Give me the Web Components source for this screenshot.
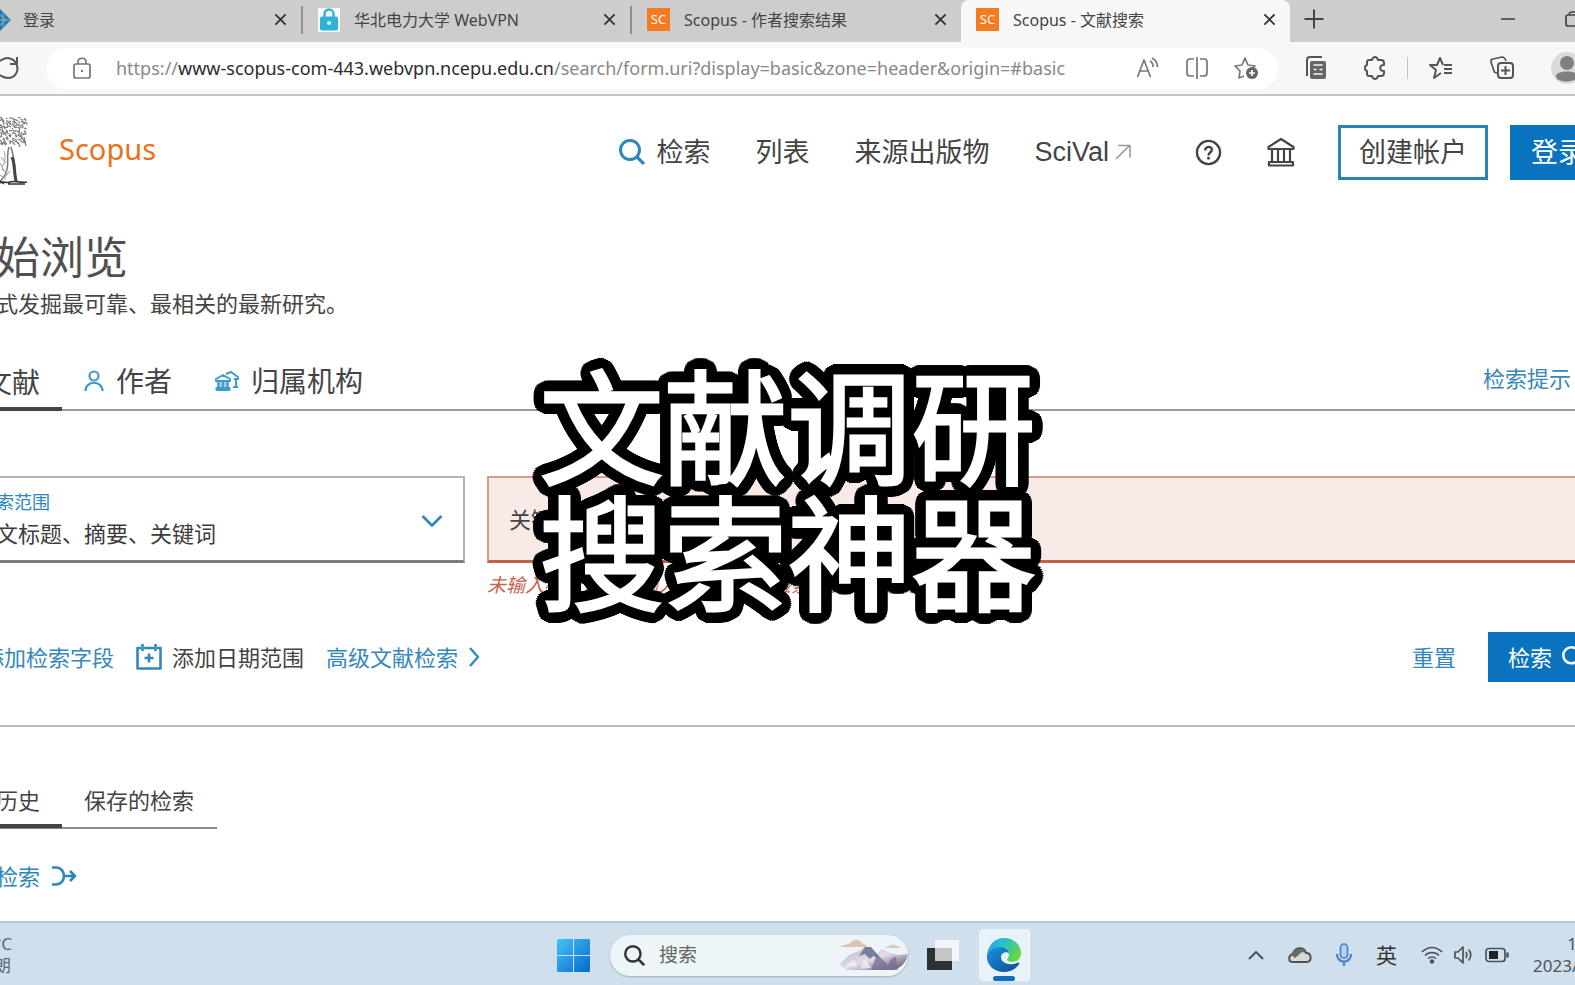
<!DOCTYPE html>
<html lang="zh-CN">
<head>
<meta charset="utf-8">
<meta name="viewport" content="width=device-width, initial-scale=1">
<title>Scopus - 文献搜索</title>
<style>
html, body { margin: 0; height: 100%; }
body { background: #fff; color: #444; font: 22px/32px "Noto Sans", "Noto Sans CJK SC", sans-serif; overflow: hidden; }
</style>
</head>
<body>
<app-window></app-window>
<script>
const ICONS = {
  close: ['0 0 14 14', '<path d="M1.5 1.500l11 11M12.500 1.500l-11 11" stroke-width="2"/>'],
  plus: ['0 0 20 20', '<path d="M10 0.500v19M0.500 10h19" stroke-width="2"/>'],
  minimize: ['0 0 14 14', '<path d="M0 7h14" stroke-width="1.600"/>'],
  restore: ['0 0 16 16', '<rect x="1" y="4" width="11" height="11" rx="2"/><path d="M4 4c0-2 1-3 3-3h5c2 0 3 1 3 3v5c0 2-1 3-2 3"/>'],
  diamond: ['0 0 11 22', '<path d="M0 0L11 11 0 22z" fill="#2a7ca8" stroke="none"/><path d="M0 6l6 5-6 5M3 4v14M0 11h10" stroke="#7bb5cf" stroke-width="1"/>'],
  vpn: ['0 0 22 24', '<path d="M0 0h22v24H0z" fill="#f4fcff" stroke="none"/><path d="M6.500 10V6a4.500 4.500 0 019 0v4" stroke="#2db3d6" stroke-width="2.400"/><rect x="2" y="8.500" width="18" height="14" rx="2" fill="#2db3d6" stroke="none"/><circle cx="11" cy="15" r="2" fill="#d9f4fb" stroke="none"/>'],
  reload: ['0 0 20 26', '<path d="M0 6C6 1 13 3 16 8c4 8-1 15-8 15-3 0-6-1-8-3M17 2v7h-7" stroke-width="2"/>'],
  lock: ['0 0 18 22', '<rect x="1" y="7" width="16" height="14" rx="2"/><path d="M5 7V5c0-5 8-5 8 0v2"/><circle cx="9" cy="14" r="1.200" fill="currentColor" stroke="none"/>'],
  read: ['0 0 24 22', '<path d="M1.500 20L8 3l6.500 17M4 14h8M14 4c2 1 3 3 3 6M16 1c4 2 5.500 5 5.500 9"/>'],
  split: ['0 0 24 22', '<path d="M9 2H5C3 2 2 3 2 5v11c0 2 1 3 3 3h4M15 2h4c2 0 3 1 3 3v11c0 2-1 3-3 3h-4M12 0v22"/>'],
  staradd: ['0 0 25 24', '<path d="M10 20l-5 2 1-7-5-5 7-1 3-7 3 7 7 1-2 2"/><circle cx="18" cy="17" r="6" fill="#666" stroke="none"/><path d="M18 14v6M15 17h6" stroke="#fff"/>'],
  pages: ['0 0 22 24', '<path d="M2 20V4c0-2 1-3 3-3h12" stroke-width="2"/><rect x="5" y="5" width="16" height="18" rx="2" fill="#666" stroke="none"/><path d="M8.500 9h9M8.500 13.500h3M8.500 18h9M14.500 13.500h3" stroke="#f7f7f7" stroke-width="1.500"/>'],
  puzzle: ['0 0 22 24', '<path d="M5 4h3c1-4 5-4 6 0h3c2 0 3 1 3 3v2c-5 0-5 6 0 6v2c0 2-1 3-3 3h-3c-1 4-5 4-6 0H5c-1 0-2-1-2-2v-3c-3-1-3-5 0-6V6c0-1 1-2 2-2z" stroke-width="2"/>'],
  starlist: ['0 0 24 24', '<path d="M12 17l-7 5 2-8-6-5h7l3-7 3 7M15 9h8M15 13h8M15 17h8" stroke-width="2"/>'],
  collect: ['0 0 24 24', '<path d="M7 17c-2 0-3-1-3-2L1 6c0-2 0-3 2-3l9-2c2 0 3 1 4 4"/><rect x="8" y="7" width="15" height="15" rx="3" stroke-width="2"/><path d="M15.500 10v9M11 14.500h9" stroke-width="2"/>'],
  avatar: ['0 0 32 32', '<circle cx="16" cy="16" r="16" fill="#dcdad8" stroke="none"/><circle cx="16" cy="11" r="7" fill="#82807e" stroke="none"/><path d="M5 24c0-6 22-6 22 0 0 7-22 8-22 0z" fill="#82807e" stroke="none"/>'],
  search: ['0 0 26 26', '<circle cx="11" cy="11" r="9.500" stroke-width="3"/><path d="M18 18l7 7" stroke-width="3.200"/>'],
  out: ['0 0 16 16', '<path d="M1 15L14 2M3 1.500h12v12" stroke-width="1.600"/>'],
  help: ['0 0 28 28', '<circle cx="14" cy="14" r="12" stroke-width="2.400"/><path d="M10.500 12c0-5 7-5 7-1 0 3-3.500 3-3.500 6" stroke-width="2.400"/><circle cx="14" cy="20" r="1.500" fill="currentColor" stroke="none"/>'],
  bank: ['0 0 28 30', '<path d="M1.500 10L14 2l12.500 8v2h-25zM2 25h24v3.500H2zM5 12v13M11 12v13M17 12v13M23 12v13" stroke-width="2.200"/>'],
  person: ['0 0 20 22', '<circle cx="10" cy="6" r="4.500" stroke-width="2.200"/><path d="M1.500 21c0-11 17-11 17 0" stroke-width="2.200"/>'],
  banks: ['0 0 24 20', '<path d="M2 9h12v8H2z" fill="#72b8dc" stroke="none" opacity=".7"/><path d="M1 8l7-4 7 4v2H1zM1.500 17h13v2h-13zM3.500 10v7M8 10v7M12.500 10v7" stroke-width="2"/><path d="M11 3l5-2 7 5v2h-4M21 8v7M18 16h5" stroke-width="2"/>'],
  down: ['0 0 22 14', '<path d="M1.500 2L11 11.500 20.500 2" stroke-width="2.600"/>'],
  right: ['0 0 12 20', '<path d="M2 1l8 9-8 9" stroke-width="2.400"/>'],
  calendar: ['0 0 26 26', '<path d="M5 4H1.500v20.500h23V4H21M8 4h10M6.500 0v7M19.500 0v7M13 9.500v9M8.500 14h9" stroke-width="2.600"/>'],
  merge: ['0 0 26 20', '<path d="M1 1.500h4c5 0 8 4 8 8.500s-3 8.500-8 8.500H1M13 10h11M19 5l5 5-5 5" stroke-width="2.600"/>'],
  win: ['0 0 33 33', '<defs><linearGradient id="w" x2="1" y2="1"><stop stop-color="#45c3f8"/><stop offset="1" stop-color="#0569c9"/></linearGradient></defs><path d="M1 0h15v16H0V1zM17 0h15l1 1v15H17zM0 17h16v16H1l-1-1zM17 17h16v15l-1 1H17z" fill="url(#w)" stroke="none"/>'],
  peaks: ['0 0 68 32', '<defs><linearGradient id="p" x2="1" y2="1"><stop stop-color="#b9b2c6"/><stop offset=".5" stop-color="#e2dce8"/><stop offset="1" stop-color="#4d4263"/></linearGradient></defs><g stroke="none"><path d="M1 8c2-3 7-2 9-4 3-4 10-4 12 0 2 2 5 1 5 4z" fill="#dcc3b2"/><path d="M45 9c1-2 4-1 6-3 4-1 6 1 11 3z" fill="#d9cabf"/><path d="M0 25l9-9 10-4 6-4 6 0 6 7 5-5 9 4 8 2 9-1c-1 8-7 14-15 16H8c-3-1-6-3-8-6z" fill="url(#p)"/><path d="M25 8l6 0 6 7 3 5-7-3-3 3-5-5-6 2z" fill="#75809c"/><path d="M31 31l6-16 9 9 3 7zM45 31l7-12 4-1 2 13z" fill="#7a6c95" opacity=".75"/><path d="M4 28l10-8 3 7zM20 30l5-10 6 9z" fill="#f5f1f6" opacity=".7"/></g>'],
  tasks: ['0 0 34 32', '<g stroke="none"><path d="M1 9h25v22H1z" fill="#2c3232"/><path d="M9 1h24v21H9z" fill="#fff" opacity=".72"/></g>'],
  edge: ['0 0 34 34', '<defs><linearGradient id="e1" x2="1" y2=".5"><stop stop-color="#2a9fe0"/><stop offset=".5" stop-color="#2cc0c8"/><stop offset="1" stop-color="#65d846"/></linearGradient><linearGradient id="e2" x2="1" y2="1"><stop stop-color="#1a95df"/><stop offset="1" stop-color="#0b4a94"/></linearGradient></defs><g stroke="none"><path d="M0 17C1 7 8 0 17 0c10 0 17 7 17 15 0 6-4 9-9 9-4 0-6-2-4-4 3-5-1-10-8-10C7 10 2 13 0 17z" fill="url(#e1)"/><path d="M0 17c2-5 7-8 12-8 6 0 10 3 10 6-3-2-8 0-8 4 0 6 8 9 16 6 2-1 3 0 2 1-3 5-9 8-15 8C7 34-1 27 0 17z" fill="url(#e2)"/></g>'],
  up: ['0 0 16 10', '<path d="M1 9l7-7 7 7" stroke-width="2"/>'],
  cloud: ['0 0 24 18', '<path d="M5 16c-5 0-5-7 0-8C7 1 16 0 18 7c6 0 6 9 1 9z" fill="#d8d8d4" stroke-width="2"/><path d="M3 9c2-7 12-8 15-2l-4-1-7 6z" fill="#666b68" stroke="none"/>'],
  mic: ['0 0 16 24', '<rect x="4.500" y="1" width="7" height="14" rx="3.500" fill="#b5d4f1"/><path d="M1 11c0 10 14 10 14 0M8 19v4" stroke-width="2.200"/>'],
  wifi: ['0 0 22 18', '<path d="M1 6c6-6 14-6 20 0M4 9.500c4-4 10-4 14 0M7 12.500c2-2 6-2 8 0" stroke-width="1.700"/><circle cx="11" cy="15.500" r="2.200" fill="currentColor" stroke="none"/>'],
  volume: ['0 0 20 18', '<path d="M1 6h3l5-5v16l-5-5H1zM12 6c1 2 1 4 0 6M14.500 3.500c3 3 3 8 0 11" stroke-width="1.700"/>'],
  battery: ['0 0 24 16', '<rect x="1" y="1.500" width="19" height="13" rx="3"/><rect x="4" y="4" width="9" height="8" fill="#222" stroke="none"/><path d="M22.500 5.500v5" stroke-width="2.400"/>']
};

function define(name, html, setup) {
  const tpl = document.createElement('template');
  tpl.innerHTML = html;
  customElements.define(name, class extends HTMLElement {
    constructor() {
      super();
      this.attachShadow({ mode: 'open' }).append(tpl.content.cloneNode(true));
    }
    connectedCallback() { if (setup) setup(this, this.shadowRoot); }
  });
}

define('ui-icon', `<style>
:host { display: block; flex: none; line-height: 0; }
svg { display: block; fill: none; stroke: currentColor; stroke-width: 1.7; stroke-linejoin: round; }
</style><span></span>`, (el, root) => {
  const [box, body] = ICONS[el.getAttribute('name')];
  const [, , w, h] = box.split(' ');
  const width = el.getAttribute('w') || w;
  root.querySelector('span').innerHTML =
    `<svg aria-hidden="true" viewBox="${box}" width="${width}" height="${Math.round(width * h / w)}">${body}</svg>`;
});

/* The engraved tree of the publisher: foliage scribbles over a trunk. */
define('tree-mark', `<style>:host { display: block; } svg { display: block; fill: none; stroke: #777; }</style>
<svg width="28" height="70" viewBox="0 0 28 70" aria-hidden="true"><g></g>
<path d="M9 30c-3 8 0 14-2 22-1 6-4 9-7 13M11 30c2 8 4 15 4 22 0 5 0 8 2 12" stroke-width="1.500"/>
<path d="M4 34c2 6 1 12-2 16M1 40l5 6M2 52l6 5M5 60l5-6M0 46l4 8M0 58l6 4" stroke="#999"/>
<path d="M12 40c3 7 2 16 4 24" stroke="#444" stroke-width="3"/>
<path d="M0 66c4-3 6 1 10-1s9 1 17 0M8 67l17 0M0 64l4 3" stroke="#333" stroke-width="1.500"/></svg>`, (el, root) => {
  let s = 7, d = '';
  const rnd = n => (s = (s * 73 + 41) % 997) % n;
  for (let y = 1; y < 28; y += 3)
    for (let x = 0; x < 26; x += 3)
      d += `M${x} ${y + rnd(3)}q${rnd(4)} ${rnd(5) - 3} ${1 + rnd(3)} ${rnd(4)}`;
  root.querySelector('g').innerHTML = `<path d="${d}" stroke-width="1.200"/>`;
});

define('browser-tab', `<style>
:host { box-sizing: border-box; flex: 0 0 329px; height: 42px; display: flex; align-items: center; gap: 14px; padding: 0 14px 3px 15px; font-size: 16px; line-height: 24px; color: #444; }
:host([cut]) { flex-basis: 303px; padding-left: 0; gap: 12px; }
:host([active]) { background: #f7f7f7; border-radius: 8px 8px 0 0; }
:host([divided]) { border-right: 2px solid #8f8f8f; border-image: linear-gradient(transparent 15%, #8f8f8f 15%, #8f8f8f 80%, transparent 80%) 1; }
slot[name=icon] { display: block; }
span { flex: 1; white-space: nowrap; }
button { border: 0; padding: 0; background: none; color: #333; }
</style><slot name="icon"></slot><span><slot></slot></span><button aria-label="关闭标签页"><ui-icon name="close" w="13"></ui-icon></button>`);

define('sc-badge', `<style>:host { display: block; width: 23px; height: 23px; background: #f47b1f; color: #fff; font-size: 13px; line-height: 23px; text-align: center; }</style><slot></slot>`);

define('tab-strip', `<style>
:host { display: flex; height: 42px; background: #cdcdcd; overflow: hidden; color: #444; }
.tools { flex: 1; display: flex; align-items: center; padding: 0 0 4px 14px; gap: 50px; }
button { border: 0; padding: 0; background: none; color: inherit; }
.new { margin-right: auto; }
.crop { width: 10px; overflow: hidden; }
</style>
<browser-tab cut divided><ui-icon slot="icon" name="diamond"></ui-icon>登录</browser-tab>
<browser-tab divided><ui-icon slot="icon" name="vpn"></ui-icon>华北电力大学 WebVPN</browser-tab>
<browser-tab><sc-badge slot="icon">SC</sc-badge>Scopus - 作者搜索结果</browser-tab>
<browser-tab active><sc-badge slot="icon">SC</sc-badge>Scopus - 文献搜索</browser-tab>
<div class="tools"><button class="new" aria-label="新建标签页"><ui-icon name="plus"></ui-icon></button>
<button aria-label="最小化"><ui-icon name="minimize"></ui-icon></button><button class="crop" aria-label="还原"><ui-icon name="restore"></ui-icon></button></div>`);

define('address-bar', `<style>
:host { box-sizing: border-box; height: 54px; display: flex; align-items: center; background: #f7f7f7; border-bottom: 2px solid #c4c4c4; color: #555; overflow: hidden; }
button { border: 0; padding: 0; background: none; color: inherit; flex: none; }
.pill { flex: 1; min-width: 0; height: 41px; margin: 0 27px 0 26px; padding: 0 19px 0 27px; display: flex; align-items: center; gap: 25px; border-radius: 21px; background: #fff; color: #777; box-sizing: border-box; }
a { flex: 1; min-width: 0; font: 18px/28px "Noto Sans", sans-serif; color: #888; text-decoration: none; white-space: nowrap; }
b { font-weight: 400; color: #2c2c2c; }
.tools { display: flex; align-items: center; gap: 37px; }
.pair { display: flex; align-items: center; gap: 21px; }
.pair i { width: 1px; height: 22px; background: #c4c4c4; }
.crop { width: 24px; overflow: hidden; }
</style>
<button aria-label="刷新"><ui-icon name="reload"></ui-icon></button>
<div class="pill"><ui-icon name="lock"></ui-icon>
<a href="#basic">https://<b>www-scopus-com-443.webvpn.ncepu.edu.cn</b>/search/form.uri?display=basic&amp;zone=header&amp;origin=#basic</a>
<button aria-label="朗读"><ui-icon name="read"></ui-icon></button><button aria-label="拆分窗口"><ui-icon name="split"></ui-icon></button><button aria-label="收藏"><ui-icon name="staradd"></ui-icon></button></div>
<div class="tools"><button aria-label="页面"><ui-icon name="pages"></ui-icon></button>
<div class="pair"><button aria-label="扩展"><ui-icon name="puzzle"></ui-icon></button><i></i><button aria-label="收藏夹"><ui-icon name="starlist"></ui-icon></button></div>
<button aria-label="集锦"><ui-icon name="collect"></ui-icon></button><button class="crop" aria-label="个人资料"><ui-icon name="avatar"></ui-icon></button></div>`);

define('site-header', `<style>
:host { display: flex; align-items: center; height: 112px; margin-right: -31px; color: #444; font-size: 27px; line-height: 40px; }
.brand { margin: 0 0 6px 31px; color: #e9711c; font: 29px/40px "Noto Sans", sans-serif; text-decoration: none; }
nav { margin-left: auto; display: flex; align-items: center; gap: 45px; }
nav a { display: flex; align-items: center; gap: 11px; color: inherit; text-decoration: none; }
nav a ui-icon { color: #2f86bd; }
nav a.ext { gap: 6px; margin-right: 19px; font-family: "Liberation Sans", sans-serif; }
nav a.ext ui-icon { color: #999; }
button { font: inherit; color: inherit; border: 0; padding: 0; background: none; }
.acct { display: flex; gap: 22px; margin-left: 43px; }
.acct button { box-sizing: border-box; height: 55px; padding: 0 18px; border: 3px solid #2a82b8; white-space: nowrap; }
.acct .in { background: #0a73bf; border-color: #0a73bf; color: #fff; }
</style>
<tree-mark></tree-mark><a class="brand" href="#">Scopus</a>
<nav><a href="#"><ui-icon name="search"></ui-icon>检索</a><a href="#">列表</a><a href="#">来源出版物</a><a class="ext" href="#">SciVal<ui-icon name="out"></ui-icon></a>
<button aria-label="帮助"><ui-icon name="help" w="27"></ui-icon></button><button aria-label="机构"><ui-icon name="bank"></ui-icon></button></nav>
<div class="acct"><button>创建帐户</button><button class="in">登录</button></div>`);

define('page-intro', `<style>
:host { display: block; padding-top: 18px; }
h1 { margin: 0; font-size: 44px; line-height: 62px; font-weight: 400; color: #505050; }
p { margin: 0; font-size: 22px; line-height: 30px; color: #444; }
</style><h1>始浏览</h1><p>式发掘最可靠、最相关的最新研究。</p>`);

define('search-tabs', `<style>
:host { display: flex; align-items: stretch; height: 67px; margin-top: 24px; border-bottom: 2px solid #999; font-size: 28px; line-height: 40px; color: #444; }
a { display: flex; align-items: center; gap: 12px; padding-top: 10px; color: inherit; text-decoration: none; margin-right: 43px; white-space: nowrap; }
a.on { width: 66px; margin: 0 22px -2px 0; box-shadow: inset 0 -4px #444; }
a.on span { margin-left: -12px; }
ui-icon { color: #3f9bc8; }
a.tips { margin: 0 4px 0 auto; padding-top: 4px; font-size: 22px; color: #3a87b5; }
</style>
<a class="on" href="#"><span>文献</span></a><a href="#"><ui-icon name="person"></ui-icon>作者</a><a href="#"><ui-icon name="banks"></ui-icon>归属机构</a><a class="tips" href="#">检索提示</a>`);

define('search-form', `<style>
:host { display: block; }
form { margin: 0; }
.fields { display: grid; grid-template-columns: 469px 1fr; gap: 22px; margin-top: 65px; }
.box { box-sizing: border-box; height: 87px; display: flex; flex-direction: column; justify-content: center; position: relative; border: 2px solid #b4b4b4; border-bottom: 3px solid #7c7c7c; border-left: 0; }
.box label { font-size: 18px; line-height: 28px; color: #2f86bd; }
select { appearance: none; border: 0; padding: 0; margin: 0; background: none; font: inherit; line-height: 34px; height: 34px; color: #3c3c3c; width: 100%; }
.box ui-icon { position: absolute; right: 20px; top: 36px; color: #2f86bd; }
input { box-sizing: border-box; width: 100%; height: 87px; padding: 0 20px; border: 2px solid #dc9a89; border-bottom: 3px solid #c0614e; border-right: 0; border-radius: 0; background: #f8ebe7; font: inherit; color: #444; display: block; }
input::placeholder { color: #444; opacity: 1; }
.err { margin: 8px 0 0; font-size: 19px; line-height: 28px; font-style: italic; color: #c8604c; }
.actions { display: flex; align-items: center; height: 50px; margin: 33px 0 43px; font-size: 22px; }
a, button { font: inherit; color: #3388bb; text-decoration: none; border: 0; padding: 0; background: none; display: flex; align-items: center; gap: 10px; white-space: nowrap; }
.add { margin: 0 22px 0 -14px; }
.date { color: #444; margin-right: 22px; }
.date ui-icon { color: #3388bb; }
.reset { margin: 0 32px 0 auto; }
.go { height: 50px; width: 87px; padding-left: 20px; background: #0a73bf; color: #fff; overflow: hidden; }
hr { margin: 0; border: 0; border-top: 2px solid #bdbdbd; }
</style>
<form onsubmit="return false"><div class="fields"><div class="box"><label for="scope">索范围</label><select id="scope"><option>文标题、摘要、关键词</option></select><ui-icon name="down"></ui-icon></div>
<div><input type="text" aria-label="关键词" aria-describedby="err" placeholder="关键词"><p class="err" id="err">未输入检索词。请输入检索词以便检索相关文献信息</p></div></div>
<div class="actions"><a class="add" href="#">添加检索字段</a><button type="button" class="date"><ui-icon name="calendar"></ui-icon>添加日期范围</button><a href="#">高级文献检索<ui-icon name="right"></ui-icon></a>
<button class="reset" type="reset">重置</button><button class="go" type="submit">检索<ui-icon name="search" w="22"></ui-icon></button></div></form><hr>`);

define('history-panel', `<style>
:host { display: block; }
.tabs { display: flex; width: 221px; height: 50px; margin-top: 50px; border-bottom: 2px solid #8a8a8a; }
a { color: #444; text-decoration: none; line-height: 46px; white-space: nowrap; }
.on { width: 66px; margin-right: 22px; height: 51px; box-shadow: inset 0 -4px #444; }
.merge { display: inline-flex; align-items: center; gap: 11px; color: #2b87b8; margin-top: 24px; }
</style>
<div class="tabs"><a class="on" href="#">历史</a><a href="#">保存的检索</a></div>
<a class="merge" href="#">检索<ui-icon name="merge"></ui-icon></a>`);

define('task-bar', `<style>
:host { box-sizing: border-box; flex: none; height: 64px; display: grid; grid-template-columns: 1fr auto 1fr; align-items: center; background: #cfdfec; border-top: 2px solid #b9c8d4; color: #4b545c; overflow: hidden; font-size: 17px; line-height: 22px; padding-top: 2px; }
.weather { color: #5d6a76; }
.weather div { margin-left: -6px; }
.mid { display: flex; align-items: center; padding-left: 11px; }
button { border: 0; padding: 0; background: none; color: inherit; font: inherit; display: block; }
label { box-sizing: border-box; width: 298px; height: 41px; margin: 0 18px 0 20px; padding-left: 14px; display: flex; align-items: center; gap: 14px; background: #eef5f8; border-radius: 21px; box-shadow: 0 1px 2px #9fb0bd; color: #333; overflow: hidden; }
input { flex: 1; min-width: 0; border: 0; padding: 0; background: none; font: inherit; font-size: 19px; color: #555; }
input::placeholder { color: #666; opacity: 1; }
.edge { margin-left: 19px; width: 50px; height: 52px; background: #e9f2f8; border-radius: 4px; display: flex; flex-direction: column; align-items: center; justify-content: flex-end; gap: 4px; box-shadow: 1px 0 #f6fafc; }
.edge::after { content: ""; width: 22px; height: 5px; border-radius: 3px; background: #0f6fc0; }
.tray { display: flex; align-items: center; gap: 24px; justify-self: end; }
.ime { font-size: 21px; color: #333; }
.net { display: flex; align-items: center; gap: 11px; }
.clock { text-align: right; width: 42px; white-space: nowrap; }
.clock div { margin-right: -2px; }
</style>
<div class="weather"><div>°C</div><div>朗</div></div>
<div class="mid"><button aria-label="开始"><ui-icon name="win"></ui-icon></button>
<label><ui-icon name="search" w="21"></ui-icon><input type="search" placeholder="搜索" aria-label="搜索"><ui-icon name="peaks"></ui-icon></label>
<button aria-label="任务视图"><ui-icon name="tasks"></ui-icon></button><button class="edge" aria-label="Edge"><ui-icon name="edge"></ui-icon></button></div>
<div class="tray"><ui-icon name="up"></ui-icon><ui-icon name="cloud"></ui-icon><ui-icon name="mic" style="color:#4c84c2"></ui-icon><span class="ime">英</span>
<div class="net"><ui-icon name="wifi"></ui-icon><ui-icon name="volume"></ui-icon><ui-icon name="battery"></ui-icon></div>
<div class="clock"><div>1</div><div>2023/</div></div></div>`);

define('video-caption', `<style>
:host { position: fixed; inset: 0; display: grid; place-content: center; padding-bottom: 18px; pointer-events: none; color: #fff; font: 400 124px/126px "Noto Sans CJK SC", sans-serif; text-align: center; white-space: nowrap; -webkit-text-stroke: 3px #fff; stroke-linejoin: round; text-shadow: var(--outline); }
</style><div><slot name="top"></slot></div><div><slot name="bottom"></slot></div>`, el => {
  const ring = (r, n) => Array.from({ length: n }, (_, i) => {
    const a = i * 2 * Math.PI / n;
    return `${(r * Math.cos(a)).toFixed(1)}px ${(r * Math.sin(a)).toFixed(1)}px 0 #000`;
  });
  el.style.setProperty('--outline', [...ring(12, 36), ...ring(6, 16)].join(','));
});

define('app-window', `<style>
:host { display: flex; flex-direction: column; height: 100%; overflow: hidden; }
main { flex: 1; min-height: 0; overflow: hidden; background: #fff; }
section { margin-left: -4px; }
</style>
<tab-strip></tab-strip><address-bar></address-bar>
<main><site-header></site-header><section><page-intro></page-intro><search-tabs></search-tabs><search-form></search-form><history-panel></history-panel></section></main>
<task-bar></task-bar>
<video-caption><span slot="top">文献调研</span><span slot="bottom">搜索神器</span></video-caption>`);
</script>
</body>
</html>
